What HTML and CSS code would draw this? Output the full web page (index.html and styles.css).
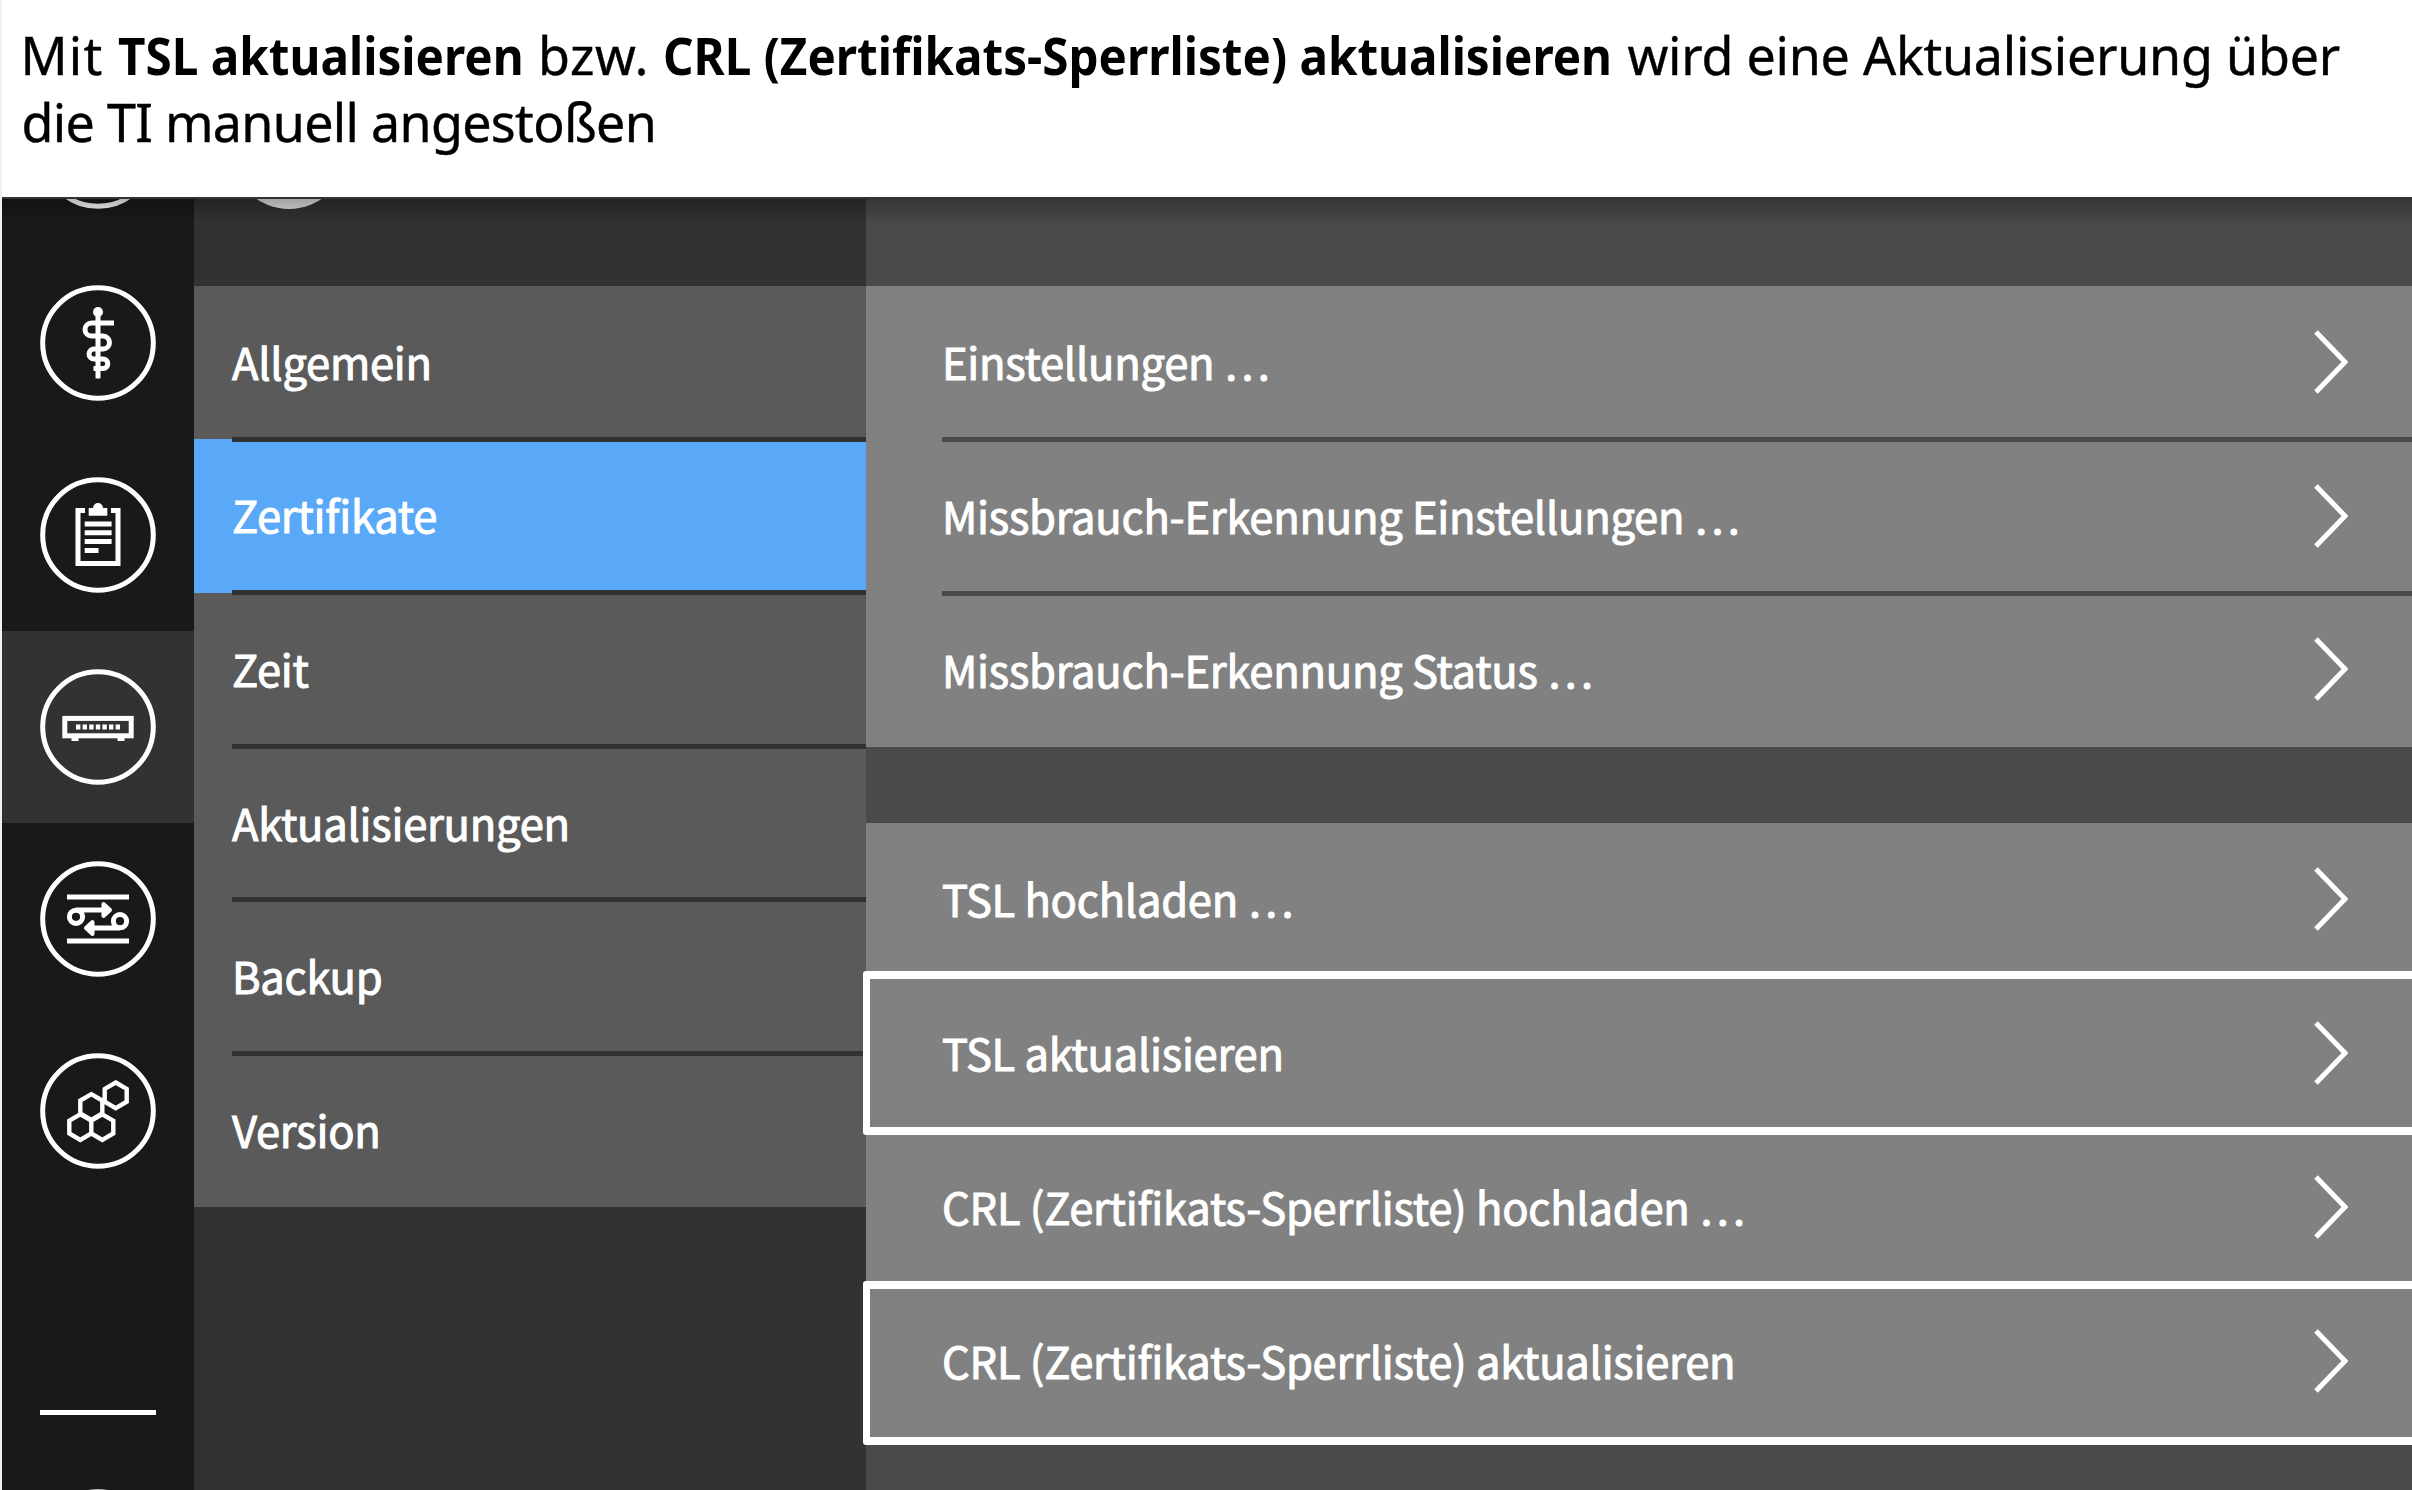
FILE: index.html
```
<!DOCTYPE html>
<html lang="de">
<head>
<meta charset="utf-8">
<title>Zertifikate</title>
<link rel="stylesheet" href="styles.css">
</head>
<body>
<header class="intro">
  <div class="line"><span class="w-mit">Mit</span><span class="w-tsl"><b class="tsl">TSL aktualisieren</b></span><span class="w-bzw">bzw.</span><span class="w-crl"><b class="crl">CRL (Zertifikats-Sperrliste) aktualisieren</b></span><span class="rest">wird eine Aktualisierung über</span></div>
  <div class="line second">die TI manuell angestoßen</div>
</header>
<main class="app">
  <nav class="rail">
    <div class="slot"><svg class="icon" viewBox="-58 -58 116 116"><circle r="55.3"/></svg></div>
    <div class="slot"><svg class="icon" viewBox="-58 -58 116 116"><circle r="55.3"/>
      <circle class="solid" cy="-31" r="5"/><path d="M0-31V35.5M16-20H-6.5A6.5 6.5 0 0 0-6.5-7H5A6.5 6.5 0 0 1 5 6H-4A5 5 0 0 0-4 16H5A4.7 4.7 0 0 1 5 25.5H-4.5"/></svg></div>
    <div class="slot"><svg class="icon" viewBox="-58 -58 116 116"><circle r="55.3"/>
      <path d="M-13-24.5H-20V28.5H20V-24.5H13M-13.3-11H13.6M-13.3-2.2H13.6M-13.3 6.6H13.6M-13.3 15.4H.5"/><path class="solid" d="M-9.3-19.3V-27H-5A5 5 0 0 1 5-27H9.3V-19.3Z"/></svg></div>
    <div class="slot active"><svg class="icon" viewBox="-58 -58 116 116"><circle r="55.3"/>
      <rect x="-33.2" y="-8.6" width="66.4" height="17.4"/><path d="M-22 0H24" stroke-dasharray="4.4 2.2"/><path class="solid" d="M-26.5 11h7v3h-7zM19.5 11h7v3h-7z"/></svg></div>
    <div class="slot"><svg class="icon" viewBox="-58 -58 116 116"><circle r="55.3"/>
      <path d="M-31-22H31M-31 22H31M-22-9H8M22 9H-8"/><circle cx="-22" cy="-2.2" r="6.6"/><circle cx="22" cy="2.2" r="6.6"/><path class="head" d="M5.500-15L12-9L5.500-3ZM-5.500 15L-12 9L-5.500 3Z"/></svg></div>
    <div class="slot"><svg class="icon hex" viewBox="-58 -58 116 116"><circle r="55.3"/>
      <path d="M17.700-28.500l11 6.400v12.800l-11 6.400l-11-6.400v-12.800zM-6.700-16.800l11 6.400v12.800l-11 6.400l-11-6.400v-12.800zM-17.700 3.300l11 6.400v12.800l-11 6.400l-11-6.400v-12.800zM4.300 3.300l11 6.400v12.800l-11 6.400l-11-6.400v-12.800z"/></svg></div>
    <div class="rule"></div>
    <svg class="icon last" viewBox="-58 -58 116 116"><circle r="55.3"/></svg>
  </nav>
  <aside class="menu">
    <div class="menu-head"><div class="avatar"></div></div>
    <div class="item">Allgemein</div>
    <div class="item selected">Zertifikate</div>
    <div class="item">Zeit</div>
    <div class="item">Aktualisierungen</div>
    <div class="item">Backup</div>
    <div class="item">Version</div>
  </aside>
  <section class="content">
    <div class="group">
      <div class="row">Einstellungen …<svg class="chev" viewBox="0 0 34 68"><path d="M2 4L31 34L2 64"/></svg></div>
      <div class="row">Missbrauch-Erkennung Einstellungen …<svg class="chev" viewBox="0 0 34 68"><path d="M2 4L31 34L2 64"/></svg></div>
      <div class="row">Missbrauch-Erkennung Status …<svg class="chev" viewBox="0 0 34 68"><path d="M2 4L31 34L2 64"/></svg></div>
    </div>
    <div class="group">
      <div class="row">TSL hochladen …<svg class="chev" viewBox="0 0 34 68"><path d="M2 4L31 34L2 64"/></svg></div>
      <div class="row marked">TSL aktualisieren<svg class="chev" viewBox="0 0 34 68"><path d="M2 4L31 34L2 64"/></svg></div>
      <div class="row">CRL (Zertifikats-Sperrliste) hochladen …<svg class="chev" viewBox="0 0 34 68"><path d="M2 4L31 34L2 64"/></svg></div>
      <div class="row marked">CRL (Zertifikats-Sperrliste) aktualisieren<svg class="chev" viewBox="0 0 34 68"><path d="M2 4L31 34L2 64"/></svg></div>
    </div>
  </section>
</main>
</body>
</html>
```
FILE: styles.css
```
* { box-sizing: border-box; }
body {
  margin: 0;
  width: 2412px;
  height: 1490px;
  overflow: hidden;
  background: #fff;
  border-left: 2px solid #f1f1f1;
}

/* Introductory sentence */
.intro {
  height: 197px;
  padding: 21px 0 0 18.5px;
  font: 52px/67px "Noto Sans", "Open Sans", sans-serif;
  color: #000;
  white-space: nowrap;
  -webkit-text-stroke: .4px #000;
}
.line { display: flex; }
.line > span { flex: none; }
.w-mit { width: 97.5px; letter-spacing: 1.2px; }
.w-tsl { width: 420px; }
.w-bzw { width: 125px; letter-spacing: .6px; }
.w-crl { width: 964.5px; }
.rest { letter-spacing: -.25px; }
.second { padding-left: 1px; letter-spacing: -.7px; }
.line b { display: inline-block; transform-origin: left; -webkit-text-stroke: 0; }
.tsl { transform: scaleX(.916); }
.crl { transform: scaleX(.915); }

/* Application */
.app {
  position: relative;
  display: grid;
  grid-template-columns: 192px 672px 1fr;
  height: 1293px;
  overflow: hidden;
  font: 43.5px/1.4 "Noto Sans CJK SC", "Noto Sans", sans-serif;
  letter-spacing: -.25px;
  color: #fff;
  -webkit-text-stroke: 1px #fff;
}
.app::before {
  content: "";
  position: absolute;
  z-index: 2;
  inset: 0 0 auto;
  height: 26px;
  border-top: 2px solid #333;
  background: linear-gradient(rgba(0, 0, 0, .28), transparent);
}

/* Icon rail */
.rail {
  display: flex;
  flex-direction: column;
  align-items: center;
  height: 1293px;
  overflow: hidden;
  background: #191919;
}
.slot {
  flex: none;
  display: grid;
  place-items: center;
  width: 192px;
  height: 192px;
}
.slot:first-child { margin-top: -142px; }
.active { background: #323232; }
.icon { display: block; flex: none; width: 116px; height: 116px; fill: none; stroke: #fff; stroke-width: 5; overflow: visible; }
.icon .solid { fill: #fff; stroke: none; }
.icon .head { fill: #fff; stroke-width: 4; stroke-linejoin: round; }
.hex path { stroke-width: 4.4; }
.rule { flex: none; width: 116px; height: 5px; margin-top: 203px; background: #fff; }
.last { margin-top: 74px; }

/* Settings menu */
.menu { background: #323232; height: 1293px; }
.menu-head { height: 88.5px; padding-left: 37px; overflow: hidden; }
.avatar { width: 116px; height: 116px; margin-top: -104px; border-radius: 50%; background: #e2e2e2; }
.item {
  display: flex;
  align-items: center;
  height: 153.6px;
  padding: 0 0 0 38px;
  background: #5a5a5a;
}
.selected { background: #5aa8f8; }
.item:not(:last-child)::after, .row:not(:last-child)::after {
  content: "";
  position: absolute;
  height: 5px;
  right: 0;
  bottom: -2.500px;
  left: 38px;
  background: #323232;
  z-index: 1;
}
.item, .row { position: relative; }

/* Action list */
.content { padding-top: 88.5px; background: #4a4a4a; height: 1293px; }
.group { background: #818181; margin-bottom: 76px; }
.row {
  display: flex;
  align-items: center;
  justify-content: space-between;
  height: 154px;
  padding: 0 64px 0 76px;
}
.group:first-child .row { height: 153.8px; }
.row:not(:last-child)::after { left: 76px; background: #4a4a4a; }
.chev { width: 34px; height: 68px; margin-bottom: 1px; fill: none; stroke: #fff; stroke-width: 5; }
.marked::before {
  content: "";
  position: absolute;
  z-index: 2;
  inset: -6px -10px -4px -3px;
  border: 8px solid #fff;
  border-width: 8px 7px;
  border-radius: 3px;
}
.marked:last-child::before { top: -4px; bottom: -6px; }
```
